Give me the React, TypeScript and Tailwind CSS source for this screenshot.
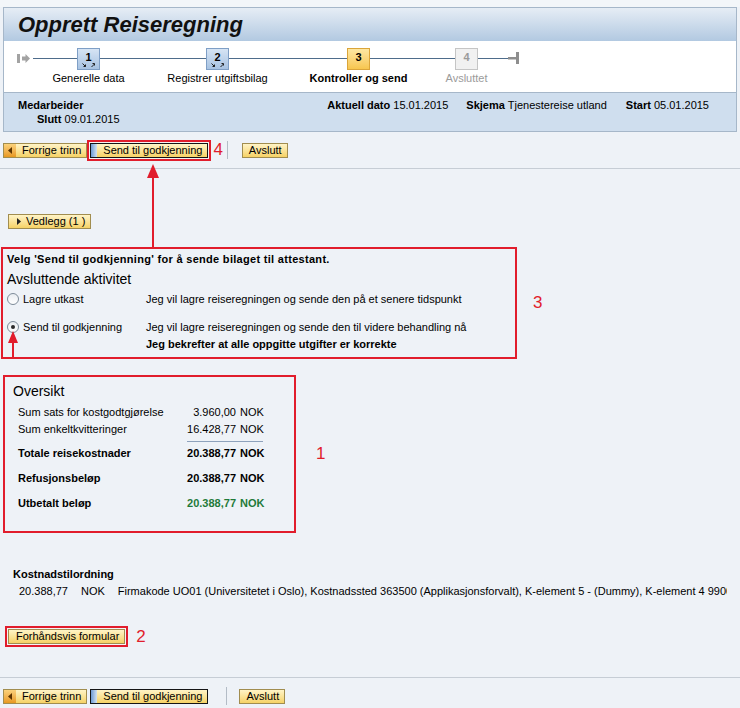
import React from "react";

type Kind = "done" | "current" | "next";

function StepArrows() {
  return (
    <svg width="14" height="5" viewBox="0 0 14 5" className="mx-auto block">
      <path d="M0.5 0.5 L3.5 3.5 M1.5 3.5 H3.5 V1.5" stroke="#1d1d1d" strokeWidth="1" fill="none" />
      <path d="M9.5 4 L12.5 1 M10.5 0.5 H12.5 V2.5" stroke="#1d1d1d" strokeWidth="1" fill="none" />
    </svg>
  );
}

function Step({ n, label, kind }: { n: number; label: string; kind: Kind }) {
  const box =
    kind === "done"
      ? "border-[#7f9fc6] bg-linear-to-b from-[#d6e4f4] to-[#a8c3e2] text-black"
      : kind === "current"
        ? "border-[#dba53a] bg-linear-to-b from-[#fde7a2] to-[#f7c64e] text-black"
        : "border-[#c5c5c5] bg-[#f1f1f1] text-[#9a9a9a]";
  const text =
    kind === "current" ? "font-bold text-black" : kind === "next" ? "text-[#9b9b9b]" : "text-black";
  return (
    <div className="flex w-[23px] flex-none flex-col items-center">
      <div className={`mt-[7px] h-[22px] w-[23px] border ${box}`}>
        <div className="pt-[2px] text-center text-[11px] font-bold leading-[12px]">{n}</div>
        {kind === "done" && <StepArrows />}
      </div>
      <div className={`mt-[2px] whitespace-nowrap text-[11px] leading-[13px] ${text}`}>{label}</div>
    </div>
  );
}

const Line = ({ w }: { w: string }) => <div className={`mt-[17px] h-px flex-none bg-[#4e6c8b] ${w}`} />;

function Btn({
  children,
  icon,
  focus = false,
  className = "",
}: {
  children: React.ReactNode;
  icon?: "prev" | "send" | "open";
  focus?: boolean;
  className?: string;
}) {
  return (
    <div
      className={`flex h-[15px] flex-none items-stretch whitespace-nowrap border bg-linear-to-b from-[#fff4c6] to-[#f6d264] text-[11px] leading-[13px] text-black ${
        focus ? "border-[#151515]" : "border-[#a18d4f]"
      } ${className}`}
    >
      {icon === "prev" && (
        <div className="flex w-[12px] items-center justify-center bg-linear-to-b from-[#fbd27a] to-[#e8981c]">
          <svg width="4" height="7" viewBox="0 0 4 7">
            <path d="M4 0 L0 3.5 L4 7 Z" fill="#5e3500" />
          </svg>
        </div>
      )}
      {icon === "send" && <div className="w-[6px] bg-linear-to-r from-[#6e9ad3] to-[#d4e2f0]" />}
      {icon === "open" && (
        <div className="flex w-[14px] items-center justify-end pr-[2px]">
          <svg width="4" height="7" viewBox="0 0 4 7">
            <path d="M0 0 L4 3.5 L0 7 Z" fill="#222" />
          </svg>
        </div>
      )}
      <span className={`${icon === "open" ? "pl-[3px]" : "pl-[6px]"} pr-[5px]`}>{children}</span>
    </div>
  );
}

function Radio({ on }: { on?: boolean }) {
  return (
    <div className="flex h-[12px] w-[12px] flex-none items-center justify-center rounded-full border border-[#7d8b99] bg-linear-to-b from-[#e9edf1] to-white">
      {on && <div className="h-[4px] w-[4px] rounded-full bg-[#2a2a2a]" />}
    </div>
  );
}

const Note = ({ n, className = "" }: { n: string; className?: string }) => (
  <span className={`text-[17px] leading-[20px] text-[#e11d2c] ${className}`}>{n}</span>
);

function Row({
  label,
  amount,
  bold = false,
  green = false,
  className = "",
}: {
  label: string;
  amount: string;
  bold?: boolean;
  green?: boolean;
  className?: string;
}) {
  return (
    <div className={`flex h-[17px] w-[245px] items-center text-[11px] ${bold ? "font-bold" : ""} ${className}`}>
      <span className="flex-1">{label}</span>
      <span className={green ? "text-[#1f7a3a]" : ""}>{amount}</span>
      <span className={`w-[27px] pl-[4px] ${green ? "text-[#1f7a3a]" : ""}`}>NOK</span>
    </div>
  );
}

function Toolbar({ marked }: { marked?: boolean }) {
  return (
    <div className="flex items-center">
      <Btn icon="prev" className="ml-[3px]">
        Forrige trinn
      </Btn>
      {marked ? (
        <>
          <div className="border-2 border-[#e11d2c] bg-[#f4f4f4] p-px">
            <Btn icon="send" focus>
              Send til godkjenning
            </Btn>
          </div>
          <Note n="4" className="ml-[2px]" />
        </>
      ) : (
        <Btn icon="send" focus className="ml-[3px]">
          Send til godkjenning
        </Btn>
      )}
      <div className={`h-[18px] w-px bg-[#b3bcc6] ${marked ? "ml-[4px]" : "ml-[18px]"}`} />
      <Btn className={marked ? "ml-[14px]" : "ml-[12px]"}>Avslutt</Btn>
    </div>
  );
}

export default function App() {
  return (
    <div className="relative h-[708px] w-[740px] overflow-hidden bg-[#eef2f7] font-['Liberation_Sans',Arial,sans-serif] text-[11px] leading-[13px] text-black">
      <div className="h-[7px] bg-[#f3f6f9]" />
      {/* header with roadmap and info */}
      <div className="mx-[3px] border border-[#a6b7c9]">
        <div className="flex h-[33px] items-center bg-linear-to-b from-[#e6edf5] to-[#b2c9e1] pl-[14px]">
          <h1 className="text-[22px] font-bold italic leading-[26px] text-[#111]">Opprett Reiseregning</h1>
        </div>
        <div className="flex h-[51px] items-start bg-white">
          <svg width="13" height="11" viewBox="0 0 13 11" className="ml-[13px] mt-[12px] flex-none">
            <rect x="0" y="1" width="3" height="9" fill="#a3a3a3" />
            <rect x="5" y="3.5" width="4" height="4" fill="#a3a3a3" />
            <path d="M8.5 1 L13 5.5 L8.5 10 Z" fill="#a3a3a3" />
          </svg>
          <Line w="ml-[3px] w-[44px]" />
          <Step n={1} label="Generelle data" kind="done" />
          <Line w="w-[106px]" />
          <Step n={2} label="Registrer utgiftsbilag" kind="done" />
          <Line w="w-[118px]" />
          <Step n={3} label="Kontroller og send" kind="current" />
          <Line w="w-[85px]" />
          <Step n={4} label="Avsluttet" kind="next" />
          <Line w="w-[30px]" />
          <svg width="12" height="12" viewBox="0 0 12 12" className="mt-[11px] flex-none">
            <rect x="0" y="5" width="8" height="2.5" fill="#8e8e8e" />
            <rect x="8" y="0" width="3" height="12" fill="#8e8e8e" />
          </svg>
        </div>
        <div className="h-[39px] border-t border-[#a6b7c9] bg-[#cfdeee] pt-[5px]">
          <div className="flex h-[14px] items-center pr-[27px]">
            <span className="flex-1 pl-[14px] font-bold">Medarbeider</span>
            <span>
              <b>Aktuell dato</b> 15.01.2015
            </span>
            <span className="ml-[18px]">
              <b>Skjema</b> Tjenestereise utland
            </span>
            <span className="ml-[19px]">
              <b>Start</b> 05.01.2015
            </span>
          </div>
          <div className="flex h-[15px] items-center pl-[33px]">
            <span>
              <b>Slutt</b> 09.01.2015
            </span>
          </div>
        </div>
      </div>

      {/* top toolbar */}
      <div className="flex h-[37px] items-center border-b border-[#c6cdd5]">
        <Toolbar marked />
      </div>

      <Btn icon="open" className="ml-[8px] mt-[45px] inline-flex">
        Vedlegg (1 )
      </Btn>

      {/* Avsluttende aktivitet */}
      <div className="mt-[18px] flex items-center">
        <div className="ml-[1px] h-[112px] w-[516px] border-2 border-[#e11d2c] pl-[4px] pt-[4px]">
          <div className="font-bold tracking-[0.3px]">Velg 'Send til godkjenning' for å sende bilaget til attestant.</div>
          <div className="mt-[5px] text-[14px] leading-[17px]">Avsluttende aktivitet</div>
          <div className="mt-[4px] flex h-[14px] items-center">
            <Radio />
            <span className="ml-[4px] w-[123px]">Lagre utkast</span>
            <span>Jeg vil lagre reiseregningen og sende den på et senere tidspunkt</span>
          </div>
          <div className="mt-[14px] flex h-[14px] items-center">
            <Radio on />
            <span className="ml-[4px] w-[123px]">Send til godkjenning</span>
            <span>Jeg vil lagre reiseregningen og sende den til videre behandling nå</span>
          </div>
          <div className="ml-[139px] mt-[4px] font-bold">Jeg bekrefter at alle oppgitte utgifter er korrekte</div>
        </div>
        <Note n="3" className="ml-[16px]" />
      </div>

      {/* Oversikt */}
      <div className="mt-[16px] flex items-center">
        <div className="ml-[3px] h-[158px] w-[293px] border-2 border-[#e11d2c] pl-[8px] pt-[6px]">
          <div className="text-[14px] leading-[17px]">Oversikt</div>
          <div className="ml-[5px] mt-[4px]">
            <Row label="Sum sats for kostgodtgjørelse" amount="3.960,00" />
            <Row label="Sum enkeltkvitteringer" amount="16.428,77" />
            <div className="ml-[169px] mt-[3px] h-px w-[76px] bg-[#8ea2bc]" />
            <Row label="Totale reisekostnader" amount="20.388,77" bold className="mt-[3px]" />
            <Row label="Refusjonsbeløp" amount="20.388,77" bold className="mt-[8px]" />
            <Row label="Utbetalt beløp" amount="20.388,77" bold green className="mt-[8px]" />
          </div>
        </div>
        <Note n="1" className="ml-[20px]" />
      </div>

      {/* Kostnadstilordning */}
      <div className="ml-[13px] mt-[35px] font-bold">Kostnadstilordning</div>
      <div className="mt-[4px] flex w-[727px] overflow-hidden whitespace-nowrap">
        <span className="ml-[19px]">20.388,77</span>
        <span className="ml-[13px]">NOK</span>
        <span className="ml-[13px]">
          Firmakode UO01 (Universitetet i Oslo), Kostnadssted 363500 (Applikasjonsforvalt), K-element 5 - (Dummy), K-element 4 9900 (Ingen)
        </span>
      </div>

      <div className="mt-[28px] flex items-center">
        <div className="ml-[5px] border-2 border-[#e11d2c] bg-[#f4f4f4] p-px">
          <Btn className="pl-[1px]">Forhåndsvis formular</Btn>
        </div>
        <Note n="2" className="ml-[8px]" />
      </div>

      {/* bottom toolbar */}
      <div className="mt-[30px] h-[32px] border-t border-[#c6cdd5] pt-[9px]">
        <Toolbar />
      </div>

      {/* annotation arrows */}
      <svg className="pointer-events-none absolute left-0 top-0" width="740" height="708" viewBox="0 0 740 708">
        <line x1="153" y1="176" x2="153" y2="249" stroke="#e11d2c" strokeWidth="2" />
        <path d="M153 164 L147 178 L159 178 Z" fill="#e11d2c" />
        <line x1="13" y1="341" x2="13" y2="357" stroke="#e11d2c" strokeWidth="2" />
        <path d="M13 331 L8 343 L18 343 Z" fill="#e11d2c" />
      </svg>
    </div>
  );
}
